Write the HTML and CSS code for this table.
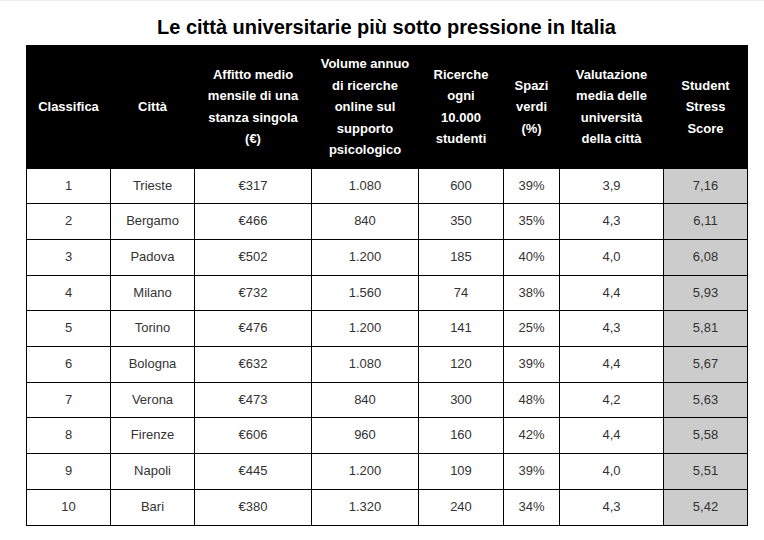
FILE: index.html
```html
<!DOCTYPE html>
<html lang="it">
<head>
<meta charset="utf-8">
<title>Le città universitarie più sotto pressione in Italia</title>
<link rel="stylesheet" href="styles.css">
</head>
<body>
<div class="page">
  <h1 class="title">Le città universitarie più sotto pressione in Italia</h1>
  <table class="ranking">
    <colgroup>
      <col class="c-rank">
      <col class="c-city">
      <col class="c-rent">
      <col class="c-volume">
      <col class="c-per">
      <col class="c-green">
      <col class="c-rating">
      <col class="c-score">
    </colgroup>
    <thead>
      <tr>
        <th>Classifica</th>
        <th>Città</th>
        <th>Affitto medio<br>mensile di una<br>stanza singola<br>(€)</th>
        <th>Volume annuo<br>di ricerche<br>online sul<br>supporto<br>psicologico</th>
        <th>Ricerche<br>ogni<br>10.000<br>studenti</th>
        <th>Spazi<br>verdi<br>(%)</th>
        <th>Valutazione<br>media delle<br>università<br>della città</th>
        <th>Student<br>Stress<br>Score</th>
      </tr>
    </thead>
    <tbody>
      <tr><td>1</td><td>Trieste</td><td>€317</td><td>1.080</td><td>600</td><td>39%</td><td>3,9</td><td class="score">7,16</td></tr>
      <tr><td>2</td><td>Bergamo</td><td>€466</td><td>840</td><td>350</td><td>35%</td><td>4,3</td><td class="score">6,11</td></tr>
      <tr><td>3</td><td>Padova</td><td>€502</td><td>1.200</td><td>185</td><td>40%</td><td>4,0</td><td class="score">6,08</td></tr>
      <tr><td>4</td><td>Milano</td><td>€732</td><td>1.560</td><td>74</td><td>38%</td><td>4,4</td><td class="score">5,93</td></tr>
      <tr><td>5</td><td>Torino</td><td>€476</td><td>1.200</td><td>141</td><td>25%</td><td>4,3</td><td class="score">5,81</td></tr>
      <tr><td>6</td><td>Bologna</td><td>€632</td><td>1.080</td><td>120</td><td>39%</td><td>4,4</td><td class="score">5,67</td></tr>
      <tr><td>7</td><td>Verona</td><td>€473</td><td>840</td><td>300</td><td>48%</td><td>4,2</td><td class="score">5,63</td></tr>
      <tr><td>8</td><td>Firenze</td><td>€606</td><td>960</td><td>160</td><td>42%</td><td>4,4</td><td class="score">5,58</td></tr>
      <tr><td>9</td><td>Napoli</td><td>€445</td><td>1.200</td><td>109</td><td>39%</td><td>4,0</td><td class="score">5,51</td></tr>
      <tr><td>10</td><td>Bari</td><td>€380</td><td>1.320</td><td>240</td><td>34%</td><td>4,3</td><td class="score">5,42</td></tr>
    </tbody>
  </table>
</div>
</body>
</html>
```
FILE: styles.css
```css
html, body {
  margin: 0;
  padding: 0;
}

body {
  background: #ffffff;
  border-top: 1px solid #eeeeee;
  font-family: "Liberation Sans", Arial, sans-serif;
  color: #000000;
}

.page {
  width: 721px;
  margin-left: 26px;
  padding-top: 15px;
}

.title {
  margin: 0 0 6px;
  font-size: 20px;
  line-height: 23px;
  font-weight: bold;
  text-align: center;
  color: #000000;
}

.ranking {
  width: 721px;
  border-collapse: collapse;
  table-layout: fixed;
  font-size: 13px;
}

.c-rank { width: 84px; }
.c-city { width: 84px; }
.c-rent { width: 117px; }
.c-volume { width: 107px; }
.c-per { width: 85px; }
.c-green { width: 56px; }
.c-rating { width: 104px; }
.c-score { width: 84px; }

.ranking th {
  background: #000000;
  color: #ffffff;
  font-weight: bold;
  line-height: 21.5px;
  padding: 7px 2px;
  border: 1px solid #000000;
  text-align: center;
  vertical-align: middle;
  white-space: nowrap;
}

.ranking td {
  border: 1px solid #000000;
  padding: 7px 4px;
  line-height: 20.7px;
  color: #333333;
  text-align: center;
  vertical-align: middle;
}

.ranking td.score {
  background: #cccccc;
}
```
